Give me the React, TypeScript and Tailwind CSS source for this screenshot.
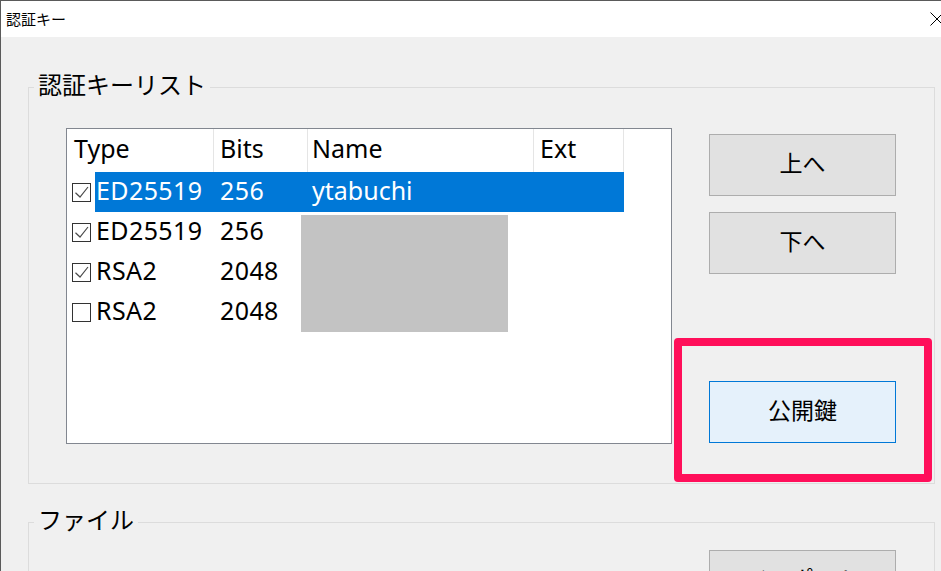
import React from "react";

type Row = { checked: boolean; type: string; bits: string; name: string; selected?: boolean };

const rows: Row[] = [
  { checked: true, type: "ED25519", bits: "256", name: "ytabuchi", selected: true },
  { checked: true, type: "ED25519", bits: "256", name: "" },
  { checked: true, type: "RSA2", bits: "2048", name: "" },
  { checked: false, type: "RSA2", bits: "2048", name: "" },
];

function CheckBox({ checked }: { checked: boolean }) {
  return (
    <div className="w-[19px] h-[19px] shrink-0 border border-[#333333] bg-white relative">
      {checked && (
        <svg width="17" height="17" viewBox="0 0 17 17" className="absolute left-0 top-0">
          <polyline points="2.5,8.8 7,13 15,3" fill="none" stroke="#4a4a4a" strokeWidth="1.2" />
        </svg>
      )}
    </div>
  );
}

function Btn({ label, focused }: { label: string; focused?: boolean }) {
  return (
    <div
      className={
        "w-[187px] h-[62px] shrink-0 flex items-center justify-center pb-[5px] text-[23px] leading-[24px] text-black border " +
        (focused ? "bg-[#e5f1fb] border-[#0078d7]" : "bg-[#e1e1e1] border-[#adadad]")
      }
    >
      {label}
    </div>
  );
}

export default function App() {
  return (
    <div className="relative w-[941px] h-[571px] overflow-hidden bg-[#f0f0f0] font-['Noto_Sans','Noto_Sans_CJK_JP',sans-serif] text-black">
      <div className="w-[960px] border-t border-l border-[#5a5a5a] flex flex-col">
        {/* title bar */}
        <div className="h-[36px] shrink-0 bg-white flex items-center justify-between pl-[5px] w-[940px]">
          <span className="text-[15px] leading-[20px]">認証キー</span>
          <svg width="14" height="14" viewBox="0 0 14 14" className="-mr-[3px]">
            <line x1="0.5" y1="0.5" x2="13.5" y2="13.5" stroke="#000" strokeWidth="1" />
            <line x1="13.5" y1="0.5" x2="0.5" y2="13.5" stroke="#000" strokeWidth="1" />
          </svg>
        </div>

        {/* content */}
        <div className="w-[940px] shrink-0 flex flex-col">
          {/* group 1 */}
          <div className="relative shrink-0 mt-[50px] ml-[27px] mr-[6px] border border-[#dcdcdc] pt-[40px] pb-[39px] flex">
            <span className="absolute left-[5px] top-[-15px] px-[4px] bg-[#f0f0f0] text-[24px] leading-[24px]">
              認証キーリスト
            </span>

            {/* list */}
            <div className="relative ml-[37px] w-[606px] h-[316px] shrink-0 border border-[#828790] bg-white">
              <div className="flex h-[43px] text-[25px]">
                <div className="w-[147px] border-r border-[#e5e5e5] pl-[7px] leading-[39px]">Type</div>
                <div className="w-[94px] border-r border-[#e5e5e5] pl-[6px] leading-[39px]">Bits</div>
                <div className="w-[226px] border-r border-[#e5e5e5] pl-[4px] leading-[39px]">Name</div>
                <div className="w-[90px] border-r border-[#e5e5e5] pl-[6px] leading-[39px]">Ext</div>
              </div>
              {rows.map((r, i) => (
                <div key={i} className="flex h-[40px] text-[25px]">
                  <div className="w-[28px] flex items-center pl-[5px]">
                    <CheckBox checked={r.checked} />
                  </div>
                  <div className={"flex " + (r.selected ? "bg-[#0078d7] text-white" : "")}>
                    <div className="w-[119px] pl-[1px] leading-[36px] tracking-[0.4px]">{r.type}</div>
                    <div className="w-[94px] pl-[6px] leading-[36px] tracking-[0.4px]">{r.bits}</div>
                    <div className="w-[226px] pl-[4px] leading-[36px]">{r.name}</div>
                    <div className="w-[90px] leading-[36px]"></div>
                  </div>
                </div>
              ))}
              {/* redaction */}
              <div className="absolute left-[234px] top-[86px] w-[207px] h-[117px] bg-[#c3c3c3]" />
            </div>

            {/* buttons */}
            <div className="ml-[37px] pt-[6px] pb-[1px] flex flex-col">
              <Btn label="上へ" />
              <div className="mt-[16px]">
                <Btn label="下へ" />
              </div>
              <div className="mt-auto">
                <Btn label="公開鍵" focused />
              </div>
            </div>
          </div>

          {/* group 2 */}
          <div className="relative shrink-0 mt-[38px] ml-[27px] mr-[6px] h-[200px] border border-[#dcdcdc] pt-[27px] flex justify-end pr-[38px]">
            <span className="absolute left-[5px] top-[-15px] px-[4px] bg-[#f0f0f0] text-[24px] leading-[24px]">
              ファイル
            </span>
            <Btn label="インポート" />
          </div>
        </div>
      </div>

      {/* highlight annotation */}
      <div className="absolute left-[674px] top-[338px] w-[258px] h-[144px] border-[8px] border-[#ff0f5a] rounded-[4px]" />
    </div>
  );
}
